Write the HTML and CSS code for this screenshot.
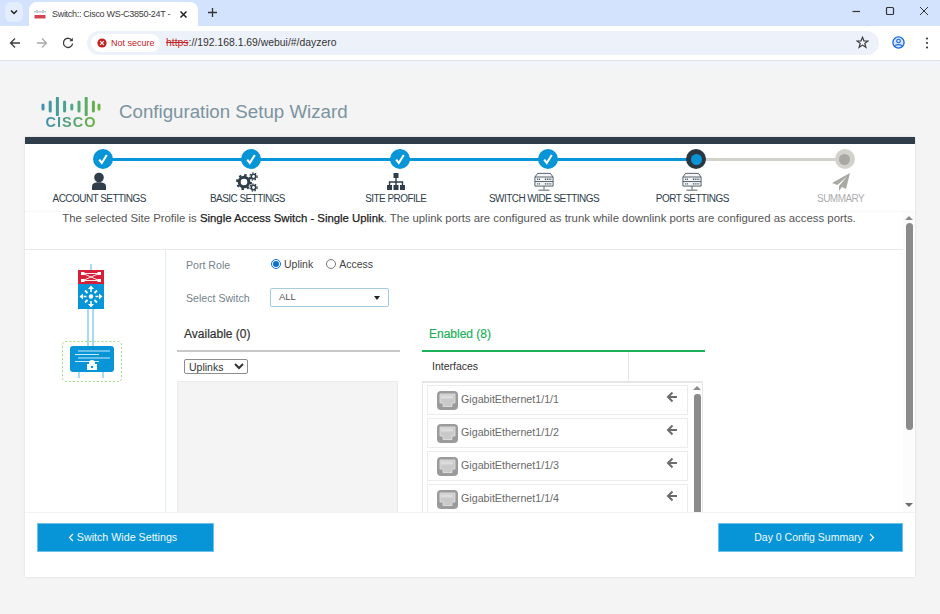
FILE: index.html
```html
<!DOCTYPE html>
<html lang="en">
<head>
<meta charset="utf-8">
<title>Switch: Cisco WS-C3850-24T</title>
<link rel="stylesheet" href="styles.css">
</head>
<body>
<svg class="defs" width="0" height="0" aria-hidden="true">
  <symbol id="check" viewBox="0 0 20 20"><path d="M6.2 10.6 8.8 14 13.8 6" fill="none" stroke="#fff" stroke-width="2.1"/></symbol>
  <symbol id="switch" viewBox="0 0 22 22">
    <path d="M4 1.500h14l3 4v10H1V5.500z" fill="#f4f5f6" stroke="#46545f" stroke-width="1"/>
    <path d="M1 5.500h20M1 10.500h20M11 15.500v4M5 20h12" fill="none" stroke="#46545f" stroke-width="1"/>
    <path d="M3.500 8h3M3.500 13h3M12 8h7M12 13h7" stroke="#46545f" stroke-width="1.500" stroke-dasharray="1.200 .8" fill="none"/>
  </symbol>
  <symbol id="port" viewBox="0 0 21 19">
    <rect width="21" height="19" rx="4" fill="#9b9b9b"/>
    <path d="M3 3h15v9h-3v3.500H6V12H3z" fill="#c9c9c9" stroke="#e4e4e4" stroke-width=".8"/>
    <path d="M5 4.500v3M7 4.500v3M9 4.500v3M11 4.500v3M13 4.500v3M15 4.500v3" stroke="#efefef" stroke-width="1"/>
  </symbol>
  <symbol id="back" viewBox="0 0 12 12"><path d="M11 6H3M6.500 1.500 2 6l4.500 4.500" fill="none" stroke="#6c6c6c" stroke-width="2"/></symbol>
</svg>

<header class="tabstrip">
  <div class="tab-menu"><svg width="10" height="10" viewBox="0 0 10 10"><path d="M2 3.500 5 6.500 8 3.500" fill="none" stroke="#222" stroke-width="1.500"/></svg></div>
  <div class="tab">
    <svg class="favicon" width="12" height="10" viewBox="0 0 12 10"><path d="M1 2v1.500M3 1v3M5 2v1.500M7 2v1.500M9 1v3M11 2v1.500" stroke="#7d8b96" stroke-width=".9"/><path d="M.500 6h11v3.500H.500z" fill="#d34455"/></svg>
    <span class="tab-title">Switch:: Cisco WS-C3850-24T -</span>
    <svg class="tab-close" width="9" height="9" viewBox="0 0 9 9"><path d="M1.500 1.500l6 6M7.500 1.500l-6 6" stroke="#222" stroke-width="1.500"/></svg>
  </div>
  <svg class="new-tab" width="11" height="11" viewBox="0 0 11 11"><path d="M5.500 1v9M1 5.500h9" stroke="#333" stroke-width="1.300"/></svg>
  <div class="window-controls">
    <svg width="10" height="10" viewBox="0 0 10 10"><path d="M1.500 5.500h7.500" stroke="#333" stroke-width="1.200"/></svg>
    <svg width="10" height="10" viewBox="0 0 10 10"><rect x="1.500" y="1.500" width="7" height="7" rx="1" fill="none" stroke="#333" stroke-width="1.200"/></svg>
    <svg width="10" height="10" viewBox="0 0 10 10"><path d="M1 1l8 8M9 1l-8 8" stroke="#333" stroke-width="1"/></svg>
  </div>
</header>

<nav class="toolbar">
  <div class="nav-buttons">
    <svg width="12" height="12" viewBox="0 0 12 12"><path d="M11 6H2M6 1.500 1.500 6 6 10.500" fill="none" stroke="#3c3c3c" stroke-width="1.300"/></svg>
    <svg width="12" height="12" viewBox="0 0 12 12"><path d="M1 6h9M6 1.500 10.500 6 6 10.500" fill="none" stroke="#a9a9a9" stroke-width="1.300"/></svg>
    <svg width="12" height="12" viewBox="0 0 12 12"><path d="M10 3.500A4.600 4.600 0 1 0 10.600 6.500" fill="none" stroke="#3c3c3c" stroke-width="1.300"/><path d="M10.800 .8v3.500H7.300z" fill="#3c3c3c"/></svg>
  </div>
  <div class="omnibox">
    <div class="security-chip">
      <svg width="10" height="10" viewBox="0 0 10 10"><circle cx="5" cy="5" r="4.600" fill="#c5221f"/><path d="M3.200 3.200l3.600 3.600M6.800 3.200l-3.600 3.600" stroke="#fff" stroke-width="1.200"/></svg>
      <span>Not secure</span>
    </div>
    <span class="url"><s class="scheme">https</s>://192.168.1.69/webui/#/dayzero</span>
    <svg class="star" width="13" height="13" viewBox="0 0 13 13"><path d="M6.500 1.300 8 5h3.900L8.800 7.400l1.100 3.900-3.400-2.200-3.400 2.200 1.100-3.900L1.100 5H5z" fill="none" stroke="#3c3c3c" stroke-width="1.200"/></svg>
  </div>
  <svg class="profile" width="13" height="13" viewBox="0 0 13 13"><circle cx="6.500" cy="6.500" r="5.600" fill="#d3e3fd" stroke="#1a66d6" stroke-width="1.300"/><circle cx="6.500" cy="5" r="1.800" fill="none" stroke="#1a66d6" stroke-width="1.100"/><path d="M3 10c1-1.800 6-1.800 7 0" fill="none" stroke="#1a66d6" stroke-width="1.100"/></svg>
  <svg class="kebab" width="4" height="12" viewBox="0 0 4 12"><circle cx="2" cy="1.500" r="1.100" fill="#3c3c3c"/><circle cx="2" cy="6" r="1.100" fill="#3c3c3c"/><circle cx="2" cy="10.500" r="1.100" fill="#3c3c3c"/></svg>
</nav>

<main class="page">
  <div class="page-header">
    <div class="logo">
      <svg width="60" height="19" viewBox="0 0 60 19">
        <defs><linearGradient id="cg" gradientUnits="userSpaceOnUse" x1="0" x2="60" y1="0" y2="0"><stop offset="0" stop-color="#3f8fb0"/><stop offset=".5" stop-color="#4ea58a"/><stop offset="1" stop-color="#6cb33f"/></linearGradient></defs>
        <path d="M2 8v4M9.200 5v9M16.400 1v17M23.600 5v9M30.800 8v4M38 5v9M45.200 1v17M52.400 5v9M58 8v4" stroke="url(#cg)" stroke-width="3" stroke-linecap="round" fill="none"/>
      </svg>
      <span class="logo-word">CISCO</span>
    </div>
    <h1 class="title">Configuration Setup Wizard</h1>
  </div>

  <section class="card">
    <div class="card-bar"></div>
    <ol class="stepper">
      <li class="step done">
        <span class="dot"><svg width="20" height="20"><use href="#check"/></svg></span>
        <svg class="step-icon" width="20" height="20" viewBox="0 0 20 20"><circle cx="10" cy="5.500" r="4.800" fill="#2f3e4a"/><path d="M3 18v-3.500C3 11.500 6 10.300 10 10.300s7 1.200 7 4.200V18z" fill="#2f3e4a"/></svg>
        <span class="step-label">ACCOUNT SETTINGS</span>
      </li>
      <li class="step done">
        <span class="dot"><svg width="20" height="20"><use href="#check"/></svg></span>
        <svg class="step-icon" width="22" height="20" viewBox="0 0 22 20">
          <circle cx="8" cy="10" r="4.800" fill="none" stroke="#2f3e4a" stroke-width="3"/>
          <circle cx="8" cy="10" r="7" fill="none" stroke="#2f3e4a" stroke-width="2" stroke-dasharray="2.500 3"/>
          <circle cx="17.500" cy="4.500" r="2.200" fill="none" stroke="#2f3e4a" stroke-width="1.600"/>
          <circle cx="17.500" cy="4.500" r="3.600" fill="none" stroke="#2f3e4a" stroke-width="1.200" stroke-dasharray="1.500 1.500"/>
          <circle cx="17.500" cy="15.500" r="2.200" fill="none" stroke="#2f3e4a" stroke-width="1.600"/>
          <circle cx="17.500" cy="15.500" r="3.600" fill="none" stroke="#2f3e4a" stroke-width="1.200" stroke-dasharray="1.500 1.500"/>
        </svg>
        <span class="step-label">BASIC SETTINGS</span>
      </li>
      <li class="step done">
        <span class="dot"><svg width="20" height="20"><use href="#check"/></svg></span>
        <svg class="step-icon" width="20" height="20" viewBox="0 0 20 20"><rect x="7.500" y="1" width="5" height="5" fill="#2f3e4a"/><path d="M10 6v4M3.500 13v-3h13v3M10 10v3" fill="none" stroke="#2f3e4a" stroke-width="1.400"/><path d="M1 13h5v5H1zM7.500 13h5v5h-5zM14 13h5v5h-5z" fill="#2f3e4a"/></svg>
        <span class="step-label">SITE PROFILE</span>
      </li>
      <li class="step done">
        <span class="dot"><svg width="20" height="20"><use href="#check"/></svg></span>
        <svg class="step-icon" width="20" height="20"><use href="#switch"/></svg>
        <span class="step-label">SWITCH WIDE SETTINGS</span>
      </li>
      <li class="step current">
        <span class="dot"><i class="dot-core"></i></span>
        <svg class="step-icon" width="20" height="20"><use href="#switch"/></svg>
        <span class="step-label">PORT SETTINGS</span>
      </li>
      <li class="step pending">
        <span class="dot"><i class="dot-core"></i></span>
        <svg class="step-icon" width="20" height="20" viewBox="0 0 20 20"><path d="M19 1 1 11l5.500 2L16 4.500 8 14v5l3-4 4 2z" fill="#a9a9a4"/></svg>
        <span class="step-label">SUMMARY</span>
      </li>
    </ol>

    <div class="scroller">
      <div class="scroll-content">
        <p class="intro">The selected Site Profile is <b>Single Access Switch - Single Uplink</b>. The uplink ports are configured as trunk while downlink ports are configured as access ports.</p>
        <div class="columns">
          <aside class="topology">
            <svg width="64" height="120" viewBox="0 0 64 120">
              <path d="M31 0v6M28 44v39M33 44v39M19 108v6M43 108v6" stroke="#7cc8ee" stroke-width="1.300" fill="none"/>
              <rect x="18" y="6" width="26" height="14" fill="#d6203a"/>
              <path d="M23 9.500h16M23 16.500h16M23 9.500l16 7M39 9.500l-16 7" stroke="#fff" stroke-width=".9"/>
              <g fill="#fff"><rect x="21" y="8" width="3.500" height="3"/><rect x="37.500" y="8" width="3.500" height="3"/><rect x="21" y="15" width="3.500" height="3"/><rect x="37.500" y="15" width="3.500" height="3"/></g>
              <rect x="18" y="20" width="26" height="25" fill="#0795d8"/>
              <circle cx="31" cy="32.500" r="2.200" fill="#fff"/>
              <path d="M31 28V25M31 37v3M26.500 32.500H23.500M35.500 32.500H38.500" stroke="#fff" stroke-width="1.500"/>
              <path d="M31 21.500l3 3.500h-6zM31 43.500l3-3.500h-6zM19.500 32.500l3.500-3v6zM42.500 32.500l-3.500-3v6z" fill="#fff"/>
              <path d="M27.500 29l-2.500-2.500M34.500 29l2.500-2.500M27.500 36l-2.500 2.500M34.500 36l2.500 2.500" stroke="#fff" stroke-width="1.800"/>
              <rect x="2.500" y="77.500" width="59" height="40" rx="3" fill="none" stroke="#9fd884" stroke-width="1" stroke-dasharray="2 2"/>
              <rect x="10" y="82" width="44" height="26" rx="3" fill="#0795d8"/>
              <path d="M18 87h32M15 90.500h24M18 94h32M15 97.500h24" stroke="#cbe9f8" stroke-width="1"/>
              <path d="M29 100v-1a3 3 0 0 1 6 0v1h2v6H27v-6z" fill="#fff"/>
              <circle cx="32" cy="103" r="1.200" fill="#0795d8"/>
            </svg>
          </aside>
          <div class="form">
            <div class="form-row role-row">
              <span class="form-label">Port Role</span>
              <label class="radio"><input type="radio" name="role" checked>Uplink</label>
              <label class="radio"><input type="radio" name="role">Access</label>
            </div>
            <div class="form-row switch-row">
              <span class="form-label">Select Switch</span>
              <div class="fake-select"><span>ALL</span><i class="caret"></i></div>
            </div>
            <div class="panels">
              <div class="panel available">
                <h2 class="panel-title">Available (0)</h2>
                <select class="filter"><option>Uplinks</option></select>
                <div class="empty-box"></div>
              </div>
              <div class="panel enabled">
                <h2 class="panel-title">Enabled (8)</h2>
                <div class="table-head"><span class="th-name">Interfaces</span><span class="th-action"></span></div>
                <div class="list-box">
                  <ul class="ports">
                    <li class="port"><svg width="21" height="19"><use href="#port"/></svg><span>GigabitEthernet1/1/1</span><svg class="port-arrow" width="12" height="12"><use href="#back"/></svg></li>
                    <li class="port"><svg width="21" height="19"><use href="#port"/></svg><span>GigabitEthernet1/1/2</span><svg class="port-arrow" width="12" height="12"><use href="#back"/></svg></li>
                    <li class="port"><svg width="21" height="19"><use href="#port"/></svg><span>GigabitEthernet1/1/3</span><svg class="port-arrow" width="12" height="12"><use href="#back"/></svg></li>
                    <li class="port"><svg width="21" height="19"><use href="#port"/></svg><span>GigabitEthernet1/1/4</span><svg class="port-arrow" width="12" height="12"><use href="#back"/></svg></li>
                  </ul>
                  <div class="inner-scrollbar"><i class="arrow-up"></i><i class="thumb"></i></div>
                </div>
              </div>
            </div>
          </div>
        </div>
      </div>
      <div class="outer-scrollbar"><i class="arrow-up"></i><i class="thumb"></i><i class="arrow-down"></i></div>
    </div>

    <footer class="card-footer">
      <button class="btn btn-back"><svg width="6" height="9" viewBox="0 0 6 9"><path d="M5 1 1.500 4.500 5 8" fill="none" stroke="#fff" stroke-width="1.200"/></svg>Switch Wide Settings</button>
      <button class="btn btn-next">Day 0 Config Summary<svg width="6" height="9" viewBox="0 0 6 9"><path d="M1 1l3.500 3.500L1 8" fill="none" stroke="#fff" stroke-width="1.200"/></svg></button>
    </footer>
  </section>
</main>
</body>
</html>
```
FILE: styles.css
```css
* { box-sizing: border-box; }
html, body { margin: 0; height: 100%; }
body {
  width: 940px;
  height: 614px;
  overflow: hidden;
  display: flex;
  flex-direction: column;
  font-family: "Liberation Sans", Arial, sans-serif;
  background: #f3f4f3;
  color: #333;
}
.defs { position: absolute; }

/* browser chrome */
.tabstrip {
  height: 26px;
  flex: none;
  background: #d3e3fd;
  display: flex;
  align-items: flex-start;
  padding: 2px 0 0 5px;
}
.tab-menu {
  width: 18px;
  height: 20px;
  border-radius: 6px;
  background: #e3edfd;
  display: flex;
  align-items: center;
  justify-content: center;
}
.tab {
  width: 169px;
  height: 24px;
  margin-left: 6px;
  background: #fff;
  border-radius: 8px 8px 0 0;
  display: flex;
  align-items: center;
  padding: 0 10px 0 5px;
}
.favicon { flex: none; }
.tab-title { margin-left: 6px; font-size: 9px; letter-spacing: -.3px; color: #3c3c3c; white-space: nowrap; flex: 1; }
.new-tab { margin: 5px 0 0 9px; }
.window-controls {
  margin-left: auto;
  margin-top: 4px;
  padding-right: 11px;
  display: flex;
  gap: 24px;
}
.toolbar {
  height: 35px;
  flex: none;
  background: #fff;
  border-bottom: 1px solid #dfe3e8;
  display: flex;
  align-items: center;
  padding: 0 0 1px 9px;
}
.nav-buttons { display: flex; gap: 14.500px; width: 78px; }
.omnibox {
  width: 792px;
  height: 24px;
  border-radius: 12px;
  background: #edf2fa;
  display: flex;
  align-items: center;
  padding: 0 10px 0 4px;
}
.security-chip {
  width: 69px;
  height: 18px;
  border-radius: 9px;
  background: #fff;
  display: flex;
  align-items: center;
  gap: 4px;
  padding-left: 6px;
  font-size: 9px;
  color: #c5221f;
}
.url { margin-left: 6px; font-size: 10.400px; color: #333; }
.scheme { color: #c5221f; }
.star { margin-left: auto; }
.profile { margin-left: 13px; }
.kebab { margin-left: 19.500px; }

/* page */
.page {
  flex: 1;
  min-height: 0;
  display: flex;
  flex-direction: column;
  background: linear-gradient(#f1f5fa, #f3f4f3 15px);
  padding: 0 25px 37px;
}
.page-header {
  height: 76px;
  flex: none;
  display: flex;
  align-items: flex-start;
  padding: 36px 0 0 16px;
}
.logo { width: 60px; display: flex; flex-direction: column; align-items: center; }
.logo-word {
  font-size: 14.500px;
  line-height: 13px;
  font-weight: 700;
  letter-spacing: 1px;
  background: linear-gradient(90deg, #3f8fb0, #6cb33f);
  -webkit-background-clip: text;
  background-clip: text;
  color: transparent;
}
.title {
  margin: 3px 0 0 18px;
  font-size: 18.700px;
  line-height: 24px;
  font-weight: 400;
  color: #7b93a0;
}
.card {
  flex: 1;
  min-height: 0;
  background: #fff;
  box-shadow: 0 0 2px rgba(0,0,0,.12);
  display: flex;
  flex-direction: column;
}
.card-bar { height: 7px; flex: none; background: #2f3e4a; }

/* stepper */
.stepper {
  height: 67px;
  flex: none;
  margin: 0;
  padding: 0;
  list-style: none;
  display: grid;
  grid-template-columns: repeat(6, 148.300px);
}
.step {
  position: relative;
  display: flex;
  flex-direction: column;
  align-items: center;
  padding-top: 5px;
}
.step:not(:last-child)::after {
  content: "";
  position: absolute;
  left: calc(50% + 4px);
  top: 13.500px;
  width: 100%;
  height: 3px;
  background: #0795d8;
}
.step.current::after { background: #d3d1cb !important; }
.dot {
  position: relative;
  z-index: 1;
  width: 20px;
  height: 20px;
  margin-left: 8px;
  border-radius: 50%;
  background: #0795d8;
  display: flex;
  align-items: center;
  justify-content: center;
}
.current .dot { background: #2a3743; }
.pending .dot { background: #d3d1cb; }
.dot-core { width: 11px; height: 11px; border-radius: 50%; background: #0795d8; }
.pending .dot-core { background: #a9a9a4; }
.step-icon { margin-top: 3px; height: 20px; flex: none; }
.step-label {
  margin-top: 1px;
  font-size: 10px;
  line-height: 12px;
  white-space: nowrap;
  letter-spacing: -.55px;
  color: #2f3e4a;
}
.pending .step-label { color: #adadad; }

/* scrolling region */
.scroller {
  position: relative;
  height: 301px;
  flex: none;
  overflow: hidden;
  border-top: 1px solid #f6f6f6;
}
.scroll-content { width: 890px; }
.intro {
  margin: 0;
  height: 37px;
  width: 868px;
  text-align: center;
  font-size: 11.370px;
  line-height: 13px;
  color: #555;
}
.intro b { font-weight: 400; color: #222; -webkit-text-stroke: .25px #222; }
.columns { display: flex; border-top: 1px solid #e8e8e8; width: 890px; height: 300px; }
.topology {
  width: 141px;
  flex: none;
  border-right: 1px solid #e3ecf0;
  padding: 14px 0 0 35px;
}
.form { flex: 1; min-width: 0; }
.form-row { display: flex; align-items: center; }
.form-label { width: 84px; margin-left: 20px; flex: none; font-size: 10.600px; color: #74828c; }
.role-row { height: 29px; padding-top: 1px; }
.radio { display: flex; align-items: center; font-size: 10.500px; color: #444; margin-right: 12px; position: relative; top: -1px; }
.radio input { width: 10px; height: 10px; margin: 0 3px 0 1px; accent-color: #0b6fd6; }
.switch-row { height: 19px; margin-top: 9px; }
.fake-select {
  width: 119px;
  height: 19px;
  border: 1px solid #a7cbe0;
  border-radius: 2px;
  display: flex;
  align-items: center;
  justify-content: space-between;
  padding: 0 8px;
  font-size: 9.500px;
  color: #555;
}
.fake-select span { position: relative; top: -1px; }
.caret { width: 0; height: 0; border: 3px solid transparent; border-top: 4px solid #222; border-bottom: 0; }
.panels { display: flex; gap: 22px; padding: 15px 0 0 11px; }
.panel-title {
  margin: 0;
  height: 30px;
  padding: 5px 0 0 7px;
  font-size: 12px;
  line-height: 15px;
  font-weight: 400;
  -webkit-text-stroke: .2px currentColor;
  color: #333;
  border-bottom: 2px solid #c9c9c9;
}
.available { width: 223px; }
.filter {
  display: block;
  width: 64px;
  height: 15px;
  margin: 7px 0 7px 7px;
  padding: 0;
  font-family: inherit;
  font-size: 10.500px;
  color: #333;
  background: #fff;
  border: 1px solid #8e8e8e;
  border-radius: 2px;
}
.empty-box { width: 221px; height: 200px; background: #f4f4f4; border: 1px solid #ececec; }
.enabled { width: 283px; }
.enabled .panel-title { color: #1bb15a; border-bottom-color: #1bb15a; padding-left: 7px; }
.table-head { display: flex; height: 29px; }
.th-name { width: 207px; border-right: 1px solid #e6e6e6; padding: 7px 0 0 10px; font-size: 10.500px; line-height: 14px; color: #333; }
.list-box {
  width: 281px;
  height: 180px;
  border: 1px solid #e6e6e6;
  border-width: 2px 1px 0;
  display: flex;
  padding: 2px 0 0 4px;
}
.ports { list-style: none; margin: 0; padding: 0; width: 261px; flex: none; }
.port {
  height: 30px;
  margin-bottom: 3px;
  border: 1px solid #ececec;
  display: flex;
  align-items: center;
  padding: 1px 0 0 9px;
  font-size: 10.700px;
  color: #6a6a6a;
  position: relative;
}
.port span { margin-left: 3px; position: relative; top: -2px; }
.port-arrow { position: absolute; left: 238px; top: 5px; }
.inner-scrollbar { width: 8px; margin-left: 5px; display: flex; flex-direction: column; align-items: center; }
.inner-scrollbar .thumb { display: block; width: 7px; height: 200px; margin-top: 4px; border-radius: 3px 3px 0 0; background: #8b8b8b; }
.arrow-up { width: 0; height: 0; margin-top: 1px; border: 4px solid transparent; border-bottom: 4px solid #8b8b8b; border-top: 0; display: block; }
.arrow-down { width: 0; height: 0; border: 4px solid transparent; border-top: 4px solid #707070; border-bottom: 0; display: block; margin-top: auto; }

.outer-scrollbar {
  position: absolute;
  right: 0;
  top: 0;
  bottom: 0;
  width: 12px;
  padding: 3px 0 5px;
  background: #fcfcfc;
  display: flex;
  flex-direction: column;
  align-items: center;
}
.outer-scrollbar .thumb { display: block; width: 7px; height: 207px; margin-top: 3px; border-radius: 3.500px; background: #8b8b8b; }

/* footer */
.card-footer {
  flex: 1;
  position: relative;
  z-index: 1;
  background: #fff;
  border-top: 1px solid #f3f3f3;
  display: flex;
  justify-content: space-between;
  align-items: flex-start;
  padding: 10px 12px 0;
}
.btn {
  height: 29px;
  padding: 0 0 2px;
  border: 1px solid #6fc0e8;
  background: #0795d8;
  color: #f2fafe;
  font-family: inherit;
  font-size: 10.700px;
  display: flex;
  align-items: center;
  justify-content: center;
  gap: 3px;
}
.btn svg { position: relative; top: 1px; }
.btn-back { width: 177px; padding-right: 6px; }
.btn-next { width: 185px; gap: 6px; padding-left: 8px; font-size: 10.500px; }
```
